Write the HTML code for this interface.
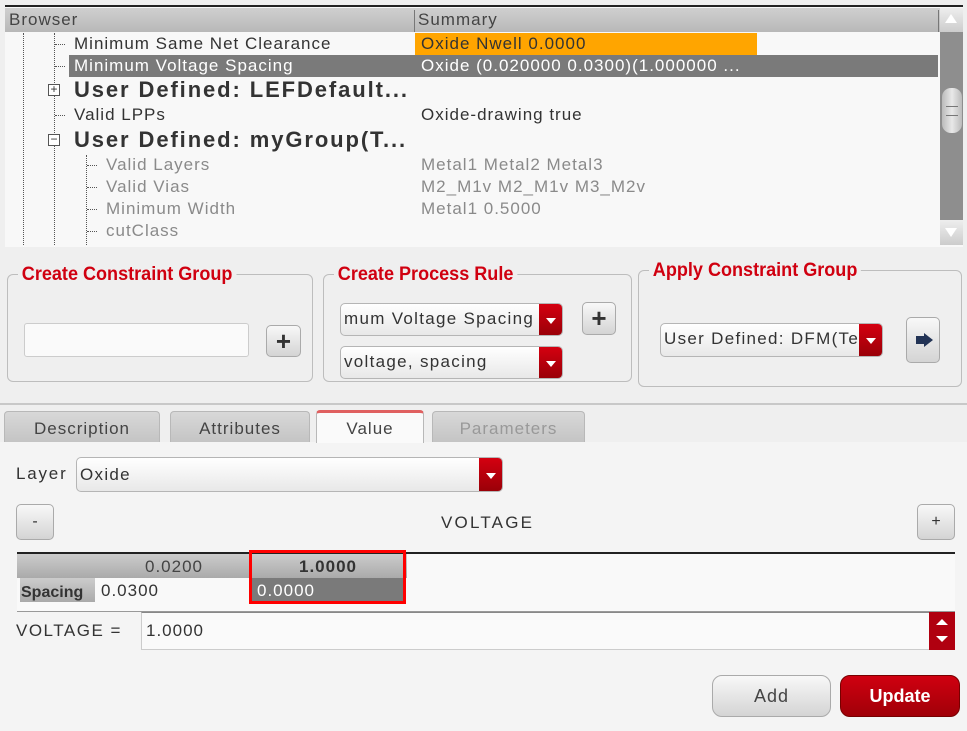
<!DOCTYPE html>
<html><head><meta charset="utf-8"><style>
*{margin:0;padding:0;box-sizing:border-box}
body{width:967px;height:731px;background:#efefef;font-family:"Liberation Sans",sans-serif;position:relative;overflow:hidden;color:#333;letter-spacing:1px}
.a{position:absolute}
.t{position:absolute;font-size:17px;white-space:nowrap;line-height:22px}
.g{color:#8a8a8a}
.b{font-weight:bold;font-size:22px;color:#333;letter-spacing:1.9px}
.box{position:absolute;border:1px solid #bdbdbd;border-radius:6px}
.ttl{position:absolute;top:-11px;left:10px;background:#efefef;padding:0 4px;color:#d00010;font-weight:bold;font-size:19px;letter-spacing:0;white-space:nowrap;transform:scaleX(.95);transform-origin:left}
.btn{position:absolute;border:1px solid #aaa;border-radius:5px;background:linear-gradient(#f8f8f8,#d4d4d4);text-align:center;color:#333;letter-spacing:0}
.dd{position:absolute;border:1px solid #b5b5b5;border-radius:5px;background:linear-gradient(#fff,#e8e8e8);font-size:17px;line-height:30px;padding-left:3px;overflow:hidden;white-space:nowrap;letter-spacing:1.3px}
.dd i{position:absolute;right:0;top:0;bottom:0;width:23px;background:linear-gradient(#d40010,#9a0008)}
.dd i:after{content:"";position:absolute;left:7px;top:45%;border:5px solid transparent;border-top:6px solid #fff;border-bottom:0}
.tab{position:absolute;top:411px;height:31px;border:1px solid #b8b8b8;border-bottom:0;border-radius:4px 4px 0 0;background:linear-gradient(#d8d8d8,#c4c4c4);font-size:17px;text-align:center;line-height:34px;color:#444}
.vl{position:absolute;border-left:1px dotted #555}
.hl{position:absolute;border-top:1px dotted #555;width:10px}
</style></head><body>
<div class="a" style="left:5px;top:5px;width:958px;height:242px;border-top:2px solid #222;background:#f8f8f8"></div>
<div class="a" style="left:5px;top:8px;width:935px;height:24px;background:linear-gradient(#cfcfcf,#b8b8b8)"></div>
<div class="t" style="left:9px;top:9px;color:#444">Browser</div>
<div class="a" style="left:414px;top:10px;width:1px;height:22px;background:#777"></div>
<div class="t" style="left:418px;top:9px;color:#444">Summary</div>
<div class="a" style="left:938px;top:10px;width:1px;height:22px;background:#777"></div>
<div class="a" style="left:940px;top:8px;width:23px;height:24px;background:linear-gradient(#eee,#ccc)"></div>
<div class="a" style="left:945px;top:14px;border:6px solid transparent;border-bottom:9px solid #fff;border-top:0"></div>
<div class="a" style="left:940px;top:32px;width:23px;height:188px;background:#8e8e8e"></div>
<div class="a" style="left:942px;top:88px;width:20px;height:45px;border-radius:9px;background:linear-gradient(90deg,#bbb,#e8e8e8,#bbb)"></div>
<div class="a" style="left:946px;top:106px;width:12px;height:10px;border-top:1px solid #777;border-bottom:1px solid #777"></div>
<div class="a" style="left:940px;top:220px;width:23px;height:25px;background:linear-gradient(#eee,#ccc)"></div>
<div class="a" style="left:945px;top:228px;border:6px solid transparent;border-top:9px solid #fff;border-bottom:0"></div>
<div class="a" style="left:415px;top:33px;width:342px;height:22px;background:#ffa500"></div>
<div class="a" style="left:69px;top:55px;width:869px;height:22px;background:#7a7a7a"></div>
<div class="vl" style="left:23px;top:33px;height:212px"></div>
<div class="vl" style="left:54px;top:33px;height:212px"></div>
<div class="vl" style="left:86px;top:155px;height:90px"></div>
<div class="hl" style="left:55px;top:44px"></div><div class="hl" style="left:55px;top:66px"></div>
<div class="hl" style="left:55px;top:115px"></div>
<div class="hl" style="left:87px;top:165px"></div><div class="hl" style="left:87px;top:187px"></div><div class="hl" style="left:87px;top:209px"></div><div class="hl" style="left:87px;top:231px"></div>
<div class="a" style="left:48px;top:84px;width:12px;height:12px;border:1px solid #555;background:#fff;font-size:12px;line-height:9px;text-align:center;letter-spacing:0">+</div>
<div class="a" style="left:48px;top:134px;width:12px;height:12px;border:1px solid #555;background:#fff;font-size:12px;line-height:9px;text-align:center;letter-spacing:0">−</div>
<div class="t" style="left:74px;top:33px">Minimum Same Net Clearance</div>
<div class="t" style="left:421px;top:33px">Oxide Nwell 0.0000</div>
<div class="t" style="left:74px;top:55px;color:#fff">Minimum Voltage Spacing</div>
<div class="t" style="left:421px;top:55px;color:#fff">Oxide (0.020000 0.0300)(1.000000 ...</div>
<div class="t b" style="left:74px;top:79px">User Defined: LEFDefault...</div>
<div class="t" style="left:74px;top:104px">Valid LPPs</div>
<div class="t" style="left:421px;top:104px">Oxide-drawing true</div>
<div class="t b" style="left:74px;top:129px">User Defined: myGroup(T...</div>
<div class="t g" style="left:106px;top:154px">Valid Layers</div><div class="t g" style="left:421px;top:154px">Metal1 Metal2 Metal3</div>
<div class="t g" style="left:106px;top:176px">Valid Vias</div><div class="t g" style="left:421px;top:176px">M2_M1v M2_M1v M3_M2v</div>
<div class="t g" style="left:106px;top:198px">Minimum Width</div><div class="t g" style="left:421px;top:198px">Metal1 0.5000</div>
<div class="t g" style="left:106px;top:220px">cutClass</div>
<div class="box" style="left:7px;top:274px;width:306px;height:108px"><div class="ttl">Create Constraint Group</div></div>
<div class="a" style="left:24px;top:323px;width:225px;height:34px;border:1px solid #ccc;border-radius:3px;background:#fafafa"></div>
<div class="btn" style="left:266px;top:325px;width:35px;height:32px;font-size:26px;font-weight:bold;line-height:30px">+</div>
<div class="box" style="left:323px;top:274px;width:309px;height:108px"><div class="ttl">Create Process Rule</div></div>
<div class="dd" style="left:340px;top:303px;width:223px;height:33px">mum Voltage Spacing<i></i></div>
<div class="btn" style="left:582px;top:302px;width:34px;height:33px;font-size:26px;font-weight:bold;line-height:31px">+</div>
<div class="dd" style="left:340px;top:346px;width:223px;height:33px">voltage, spacing<i></i></div>
<div class="box" style="left:638px;top:270px;width:324px;height:117px"><div class="ttl">Apply Constraint Group</div></div>
<div class="dd" style="left:660px;top:323px;width:223px;height:34px">User Defined: DFM(Te<i></i></div>
<div class="btn" style="left:906px;top:317px;width:34px;height:46px"><div class="a" style="left:9px;top:18px;width:8px;height:8px;background:#235"></div><div class="a" style="left:17px;top:15px;border:7px solid transparent;border-left:9px solid #235;border-right:0"></div></div>
<div class="a" style="left:0;top:403px;width:967px;height:2px;background:#c8c8c8"></div>
<div class="a" style="left:0;top:442px;width:967px;height:289px;background:#f4f4f4"></div>
<div class="tab" style="left:4px;width:156px">Description</div>
<div class="tab" style="left:170px;width:140px">Attributes</div>
<div class="tab" style="left:316px;width:108px;top:410px;height:33px;background:#fafafa;border-top:3px solid #e06060;line-height:32px">Value</div>
<div class="tab" style="left:432px;width:153px;color:#999">Parameters</div>
<div class="t" style="left:16px;top:463px;letter-spacing:1.8px">Layer</div>
<div class="dd" style="left:76px;top:457px;width:427px;height:35px;line-height:34px">Oxide<i></i></div>
<div class="btn" style="left:16px;top:504px;width:38px;height:36px;line-height:34px">-</div>
<div class="t" style="left:441px;top:512px;letter-spacing:2.2px">VOLTAGE</div>
<div class="btn" style="left:917px;top:504px;width:38px;height:36px;line-height:34px">+</div>
<div class="a" style="left:17px;top:552px;width:938px;height:2px;background:#222"></div>
<div class="a" style="left:17px;top:554px;width:938px;height:58px;background:#f9f9f9;border-bottom:1px solid #999"></div>
<div class="a" style="left:17px;top:554px;width:390px;height:24px;background:linear-gradient(#ccc,#aaa)"></div>
<div class="t" style="left:145px;top:556px;color:#444">0.0200</div>
<div class="a" style="left:20px;top:578px;width:75px;height:24px;background:linear-gradient(#ccc,#aaa)"></div>
<div class="t" style="left:21px;top:582px;font-weight:bold;font-size:16px;letter-spacing:0">Spacing</div>
<div class="t" style="left:101px;top:580px">0.0300</div>
<div class="a" style="left:249px;top:578px;width:156px;height:24px;background:#7a7a7a"></div>
<div class="t" style="left:299px;top:556px;font-weight:bold">1.0000</div>
<div class="t" style="left:257px;top:580px;color:#fff">0.0000</div>
<div class="a" style="left:249px;top:550px;width:157px;height:54px;border:3px solid #f00"></div>
<div class="t" style="left:16px;top:620px;letter-spacing:1.5px">VOLTAGE =</div>
<div class="a" style="left:141px;top:612px;width:814px;height:38px;border:1px solid #ccc;border-top:1px solid #888;background:#fafafa"></div>
<div class="t" style="left:146px;top:620px">1.0000</div>
<div class="a" style="left:929px;top:612px;width:26px;height:38px;background:#b00010"></div>
<div class="a" style="left:936px;top:619px;border:6px solid transparent;border-bottom:6px solid #fff;border-top:0"></div>
<div class="a" style="left:936px;top:636px;border:6px solid transparent;border-top:6px solid #fff;border-bottom:0"></div>
<div class="btn" style="left:712px;top:675px;width:119px;height:42px;border-radius:10px;font-size:18px;line-height:40px;color:#444;letter-spacing:1px">Add</div>
<div class="a" style="left:840px;top:675px;width:120px;height:42px;border-radius:10px;background:linear-gradient(#d00010,#a00008);border:1px solid #700;color:#fff;font-weight:bold;font-size:18px;text-align:center;line-height:40px;letter-spacing:0">Update</div>
</body></html>
